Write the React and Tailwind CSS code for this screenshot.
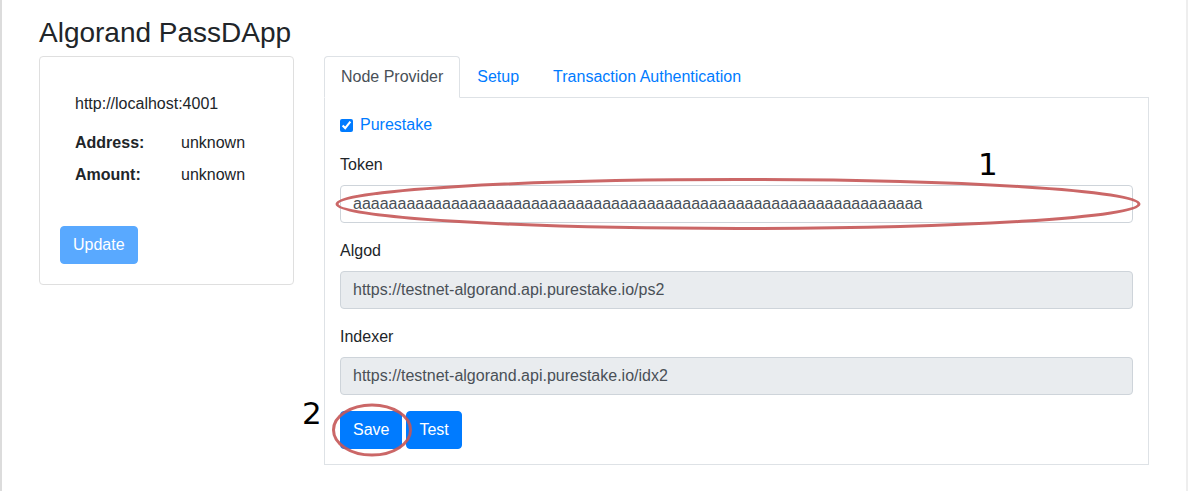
import React from 'react';

const Field = ({ label, value, disabled }) => (
  <div className="mb-4">
    <label className="block mb-2 leading-6 text-[#212529]">{label}</label>
    <input
      readOnly
      value={value}
      className={`block w-full h-[38px] px-3 rounded border border-[#ced4da] text-[#495057] text-base outline-none ${disabled ? 'bg-[#e9ecef]' : 'bg-white'}`}
    />
  </div>
);

const App = () => {
  const token = 'a'.repeat(64);

  return (
    <div
      className="relative w-[1188px] h-[491px] overflow-hidden bg-white border-l-2 border-l-[#dcdcdc] border-r-2 border-r-[#eeeeee] text-[#212529] text-base"
      style={{ fontFamily: '"Liberation Sans", Arial, sans-serif' }}
    >
      <div className="pl-[37px] pt-4">
        <h3 className="text-[28px] leading-[34px] mb-[6px] font-normal">Algorand PassDApp</h3>

        <div className="flex items-start gap-[30px]">
          {/* Account card */}
          <div className="w-[255px] border border-[#dfdfdf] rounded p-5">
            <div className="pl-[15px] pt-[15px]">
              <p className="leading-6">http://localhost:4001</p>
              <div className="flex mt-[15px] leading-6">
                <span className="w-[106px] font-bold">Address:</span>
                <span>unknown</span>
              </div>
              <div className="flex mt-2 leading-6">
                <span className="w-[106px] font-bold">Amount:</span>
                <span>unknown</span>
              </div>
            </div>
            <button className="mt-[39px] h-[38px] px-3 rounded border border-[#59a9ff] bg-[#59a9ff] text-white leading-6">Update</button>
          </div>

          {/* Settings */}
          <div className="w-[825px]">
            <ul className="flex border-b border-[#dee2e6]">
              <li className="-mb-px">
                <span className="block px-4 py-2 leading-6 border border-[#dee2e6] border-b-white rounded-t bg-white text-[#495057]">Node Provider</span>
              </li>
              <li className="-mb-px">
                <span className="block px-4 py-2 leading-6 border border-transparent text-[#007bff]">Setup</span>
              </li>
              <li className="-mb-px">
                <span className="block px-4 py-2 leading-6 border border-transparent text-[#007bff]">Transaction Authentication</span>
              </li>
            </ul>

            <div className="border-x border-b border-[#dee2e6] p-[15px]">
              <div className="flex items-center mb-4 leading-6">
                <input type="checkbox" defaultChecked className="w-[13px] h-[13px] m-0 accent-[#007bff]" />
                <span className="ml-[7px] text-[#007bff]">Purestake</span>
              </div>
              <Field label="Token" value={token} />
              <Field label="Algod" value="https://testnet-algorand.api.purestake.io/ps2" disabled />
              <Field label="Indexer" value="https://testnet-algorand.api.purestake.io/idx2" disabled />
              <div className="flex gap-1">
                <button className="h-[38px] px-3 rounded border border-[#007bff] bg-[#007bff] text-white leading-6">Save</button>
                <button className="h-[38px] px-3 rounded border border-[#007bff] bg-[#007bff] text-white leading-6">Test</button>
              </div>
            </div>
          </div>
        </div>
      </div>

      {/* Annotations */}
      <svg className="absolute left-0 top-0 pointer-events-none" width="1188" height="491">
        <ellipse cx="736" cy="204" rx="401" ry="24.5" fill="none" stroke="#c55656" strokeWidth="3" opacity="0.9" />
        <ellipse cx="370" cy="430" rx="38.5" ry="25" fill="none" stroke="#c55656" strokeWidth="3" opacity="0.9" />
      </svg>
      <span
        className="absolute left-[976px] top-[149px] text-[31px] leading-none text-black"
        style={{ fontFamily: '"DejaVu Sans", sans-serif' }}
      >
        1
      </span>
      <span
        className="absolute left-[300px] top-[398px] text-[31px] leading-none text-black"
        style={{ fontFamily: '"DejaVu Sans", sans-serif' }}
      >
        2
      </span>
    </div>
  );
};

export default App;
